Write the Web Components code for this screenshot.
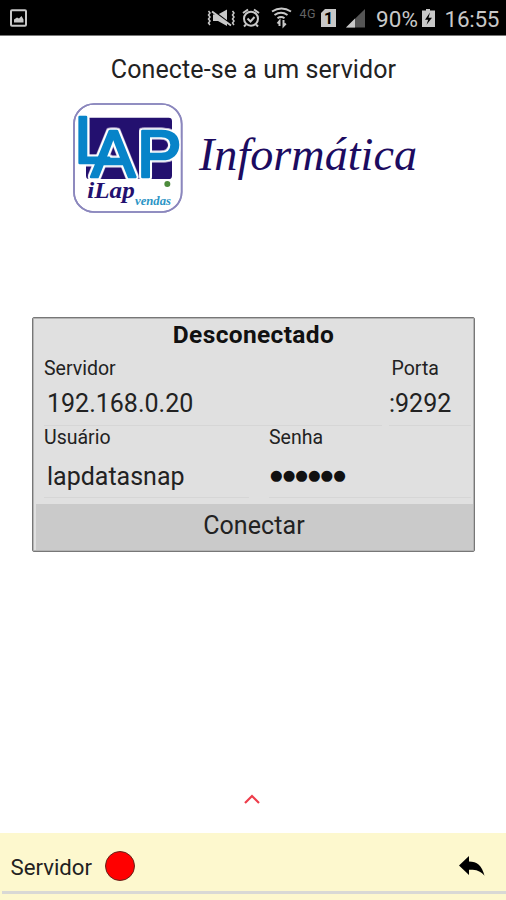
<!DOCTYPE html>
<html lang="pt-BR">
<head>
<meta charset="utf-8">
<title>iLap Vendas</title>
<style>
    html, body { margin: 0; height: 100%; }
    body { background: #fff; font-family: Roboto, "Liberation Sans", sans-serif; color: #222; overflow: hidden; }
</style>
</head>
<body>
<lap-screen>
    <status-bar slot="status" battery="90%" time="16:55"></status-bar>
    <lap-logo></lap-logo>
    <connect-panel status="Desconectado">
        <text-field class="server" label="Servidor" value="192.168.0.20"></text-field>
        <text-field class="port" label="Porta" value=":9292"></text-field>
        <text-field class="user" label="Usuário" value="lapdatasnap"></text-field>
        <text-field class="pass" label="Senha" value="●●●●●●" secret></text-field>
    </connect-panel>
    <server-bar slot="footer">Servidor</server-bar>
</lap-screen>

<script>
    class StatusBar extends HTMLElement {
        constructor() {
            super();
            this.attachShadow({ mode: 'open' });
            this.shadowRoot.innerHTML = `
                <style>
                    :host { display: block; height: 36px; background: #000; border-bottom: 1px solid #777; box-sizing: border-box; }
                    svg { display: block; width: 506px; height: 35px; }
                    text { font-family: Roboto, sans-serif; fill: #c8c8c8; }
                </style>
                <svg viewBox="0 0 506 35">
                    <rect x="11" y="10.2" width="15" height="15.6" rx="1" fill="none" stroke="#c8c8c8" stroke-width="2"/>
                    <path d="M14 22.5v-3l3-2 2 1 2.5-2.5 2 3.5v3z" fill="#c8c8c8"/>
                    <g fill="none" stroke="#c8c8c8" stroke-width="1.5">
                        <path d="M208.5 11l1.5 2-1.5 2 1.5 2-1.5 2 1.5 2-1.5 2 1.5 2M232.5 11l1.5 2-1.5 2 1.5 2-1.5 2 1.5 2-1.5 2 1.5 2"/>
                        <path d="M213 14.5h5l9-5v16.500l-9-5h-5z" fill="#c8c8c8" stroke="none"/>
                        <path d="M212 10l19 14.500" stroke="#000" stroke-width="2"/>
                        <path d="M212 11.500l19 14" stroke-width="2"/>
                    </g>
                    <g fill="none" stroke="#c8c8c8" stroke-width="2">
                        <circle cx="251" cy="18.700" r="7"/>
                        <path d="M243 13l5-3.500M259 13l-5-3.500M247.500 18.500l3 3 4-4.500M246 24.500l-2 2M256 24.500l2 2"/>
                    </g>
                    <g fill="none" stroke="#c8c8c8" stroke-width="2">
                        <path d="M272 11.500q9.500-6 19 0M274.500 15q6.500-4.500 13 0M277.500 18.300q3.500-2.500 7 0"/>
                        <path d="M279.500 26v-5l-2 2.500M283.500 20v6l2.300-2.500"/>
                    </g>
                    <text x="299.500" y="17.500" font-size="12.500" textLength="16" style="fill:#646464">4G</text>
                    <path d="M325 9h11v18h-15V13z" fill="#c8c8c8"/>
                    <text x="324" y="24" font-size="16" font-weight="bold" style="fill:#000">1</text>
                    <path d="M346 27.500L365 9v18.500z" fill="#555"/>
                    <path d="M346 27.500l9-9v9z" fill="#c8c8c8"/>
                    <text id="battery" x="376" y="26.500" font-size="22.500" textLength="42"></text>
                    <path d="M422 10.500h4V9h4v1.500h5V27h-13z" fill="#c8c8c8"/>
                    <path d="M430 12.500l-5 7.300h3.200l-1.700 5 5.500-7h-3.500z" fill="#000"/>
                    <text id="time" x="444.500" y="26.500" font-size="22.500" textLength="55"></text>
                </svg>
            `;
        }

        connectedCallback() {
            this.shadowRoot.getElementById('battery').textContent = this.getAttribute('battery');
            this.shadowRoot.getElementById('time').textContent = this.getAttribute('time');
        }
    }

    class LapLogo extends HTMLElement {
        constructor() {
            super();
            this.attachShadow({ mode: 'open' });
            this.shadowRoot.innerHTML = `
                <style>
                    :host { display: flex; gap: 15px; padding-left: 73px; height: 110px; }
                    svg { overflow: visible; }
                    .badge { width: 110px; height: 110px; }
                    .name { width: 224px; height: 80px; margin-top: 17px; }
                    .mark { font-family: "Liberation Sans", sans-serif; fill: #0784c9; stroke: #0784c9; stroke-width: 8px; stroke-linejoin: round; filter: drop-shadow(5px 0 0 #fff) drop-shadow(-5px 0 0 #fff) drop-shadow(0 5px 0 #fff) drop-shadow(0 -5px 0 #fff); }
                    .script { font-family: "Liberation Serif", serif; font-style: italic; }
                </style>
                <svg class="badge" viewBox="21 24 330 330">
                    <rect x="24" y="27" width="323" height="324" rx="60" fill="#fff" stroke="#8b87bd" stroke-width="5"/>
                    <rect x="60" y="68" width="258" height="184" rx="10" fill="#23106f"/>
                    <text class="mark" x="25 75 213" y="204 246 246" font-size="200">LAP</text>
                    <rect x="24" y="27" width="323" height="324" rx="60" fill="none" stroke="#8b87bd" stroke-width="5"/>
                    <circle cx="304" cy="267" r="9" fill="#4d8b3c"/>
                    <text class="script" x="64" y="308" font-size="67" font-weight="bold" textLength="142" lengthAdjust="spacingAndGlyphs" fill="#23106f">iLap</text>
                    <text class="script" x="207" y="329" font-size="36" font-weight="bold" textLength="108" lengthAdjust="spacingAndGlyphs" fill="#2b95c5">vendas</text>
                </svg>
                <svg class="name" viewBox="0 0 224 80">
                    <text class="script" x="1" y="49.500" font-size="46" textLength="218" lengthAdjust="spacingAndGlyphs" fill="#1c0b60">Informática</text>
                </svg>
            `;
        }
    }

    class TextField extends HTMLElement {
        constructor() {
            super();
            this.attachShadow({ mode: 'open' });
            this.shadowRoot.innerHTML = `
                <style>
                    :host { display: block; box-sizing: border-box; }
                    .label { font-size: 19.500px; line-height: 24px; padding-left: var(--label-indent, 0); }
                    .value { font-size: 25px; line-height: 30px; padding: var(--gap, 8px) 0 var(--below, 6px) var(--indent, 3px); border-bottom: 1px solid #d6d6d6; white-space: nowrap; }
                    :host([secret]) .value { font-family: "DejaVu Sans", sans-serif; font-size: 14.500px; color: #111; }
                </style>
                <div class="label"></div>
                <div class="value"></div>
            `;
        }

        connectedCallback() {
            this.shadowRoot.querySelector('.label').textContent = this.getAttribute('label');
            this.shadowRoot.querySelector('.value').textContent = this.getAttribute('value');
        }
    }

    class ConnectPanel extends HTMLElement {
        constructor() {
            super();
            this.attachShadow({ mode: 'open' });
            this.shadowRoot.innerHTML = `
                <style>
                    :host { display: flex; flex-direction: column; box-sizing: border-box; width: 443px; height: 235px; margin: 104px 0 0 32px; padding: 1px; background: #e0e0e0; border: 1px solid #777; border-radius: 2px; box-shadow: inset 0 0 0 1px #b4b4b4; }
                    .status { height: 38px; line-height: 32px; text-align: center; font-size: 24.500px; font-weight: bold; color: #111; letter-spacing: 0.35px; }
                    .fields { display: grid; grid-template-columns: 210px 15px 100px 18px 84px; padding-left: 10px; height: 147px; grid-template-rows: 69px 73px; }
                    ::slotted(.server) { grid-column: 1 / 4; width: 338px; }
                    ::slotted(.port) { grid-column: 4 / 6; margin-left: 20px; --indent: 0; --label-indent: 2.500px; }
                    ::slotted(.user) { grid-column: 1; width: 205px; --gap: 12px; --below: 5px; }
                    ::slotted(.pass) { grid-column: 2 / 6; margin-left: 15px; --indent: 1px; --gap: 10px; --below: 7px; }
                    button { height: 46px; margin: 0 0 0 2px; padding: 0 1px 3px 0; border: 0; background: #cacaca; font: 25px Roboto, sans-serif; color: #222; letter-spacing: 0.1px; }
                </style>
                <div class="status"></div>
                <div class="fields"><slot></slot></div>
                <button>Conectar</button>
            `;
        }

        connectedCallback() {
            this.shadowRoot.querySelector('.status').textContent = this.getAttribute('status');
        }
    }

    class ServerBar extends HTMLElement {
        constructor() {
            super();
            this.attachShadow({ mode: 'open' });
            this.shadowRoot.innerHTML = `
                <style>
                    :host { display: block; height: 67px; background: #fdf8ce; box-sizing: border-box; }
                    .row { display: flex; align-items: center; height: 58px; padding: 0 20px 0 10.500px; font-size: 22.200px; box-sizing: border-box; }
                    .label { padding-top: 10px; }
                    .dot { width: 30px; height: 30px; border-radius: 50%; box-sizing: border-box; background: #f00; border: 1px solid #64241a; margin: 8px auto 0 13px; }
                    .back { width: 27px; height: 22px; margin-top: 8px; }
                    hr { height: 3px; margin: 0 0 0 2px; border: 0; background: #d9d9d5; }
                </style>
                <div class="row">
                    <span class="label"><slot></slot></span>
                    <span class="dot"></span>
                    <svg class="back" viewBox="0 0 27 22"><path d="M0 10.500L10 1v5.500c8 0 13 4 15.500 14.200-4.500-5.400-9-6.200-15.500-6v5.300z" fill="#000"/></svg>
                </div>
                <hr>
            `;
        }
    }

    class LapScreen extends HTMLElement {
        constructor() {
            super();
            this.attachShadow({ mode: 'open' });
            this.shadowRoot.innerHTML = `
                <style>
                    :host { display: flex; flex-direction: column; width: 506px; height: 900px; }
                    h1 { margin: 0; height: 67px; line-height: 68px; text-align: center; font-size: 25px; font-weight: normal; letter-spacing: 0.1px; text-indent: 1px; color: #222; }
                    .arrow { display: block; width: 18px; height: 12px; margin: auto 0 28px 243px; }
                </style>
                <slot name="status"></slot>
                <h1>Conecte-se a um servidor</h1>
                <slot></slot>
                <svg class="arrow" viewBox="0 0 18 12"><path d="M2 10l7-7 7 7" fill="none" stroke="#ee3d4b" stroke-width="2.200"/></svg>
                <slot name="footer"></slot>
            `;
        }
    }

    customElements.define('status-bar', StatusBar);
    customElements.define('lap-logo', LapLogo);
    customElements.define('text-field', TextField);
    customElements.define('connect-panel', ConnectPanel);
    customElements.define('server-bar', ServerBar);
    customElements.define('lap-screen', LapScreen);
</script>
</body>
</html>
